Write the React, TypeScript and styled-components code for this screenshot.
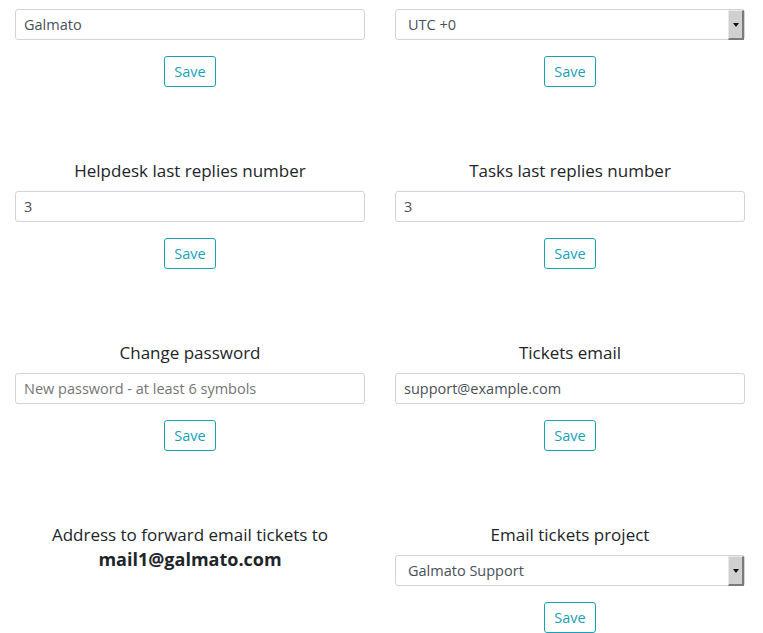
import styled, { createGlobalStyle } from 'styled-components';

const GlobalStyle = createGlobalStyle`
	body {
		margin: 0;
		background: #ffffff;
		font-family: 'Open Sans', 'Liberation Sans', sans-serif;
		color: #212529;
	}
`;

type Field =
	| { kind: 'input'; label?: string; value?: string; placeholder?: string }
	| { kind: 'select'; label?: string; value: string }
	| { kind: 'info'; label: string; value: string };

const fields: Field[] = [
	{ kind: 'input', value: 'Galmato' },
	{ kind: 'select', value: 'UTC +0' },
	{ kind: 'input', label: 'Helpdesk last replies number', value: '3' },
	{ kind: 'input', label: 'Tasks last replies number', value: '3' },
	{
		kind: 'input',
		label: 'Change password',
		placeholder: 'New password - at least 6 symbols',
	},
	{ kind: 'input', label: 'Tickets email', value: 'support@example.com' },
	{
		kind: 'info',
		label: 'Address to forward email tickets to',
		value: 'mail1@galmato.com',
	},
	{ kind: 'select', label: 'Email tickets project', value: 'Galmato Support' },
];

export default function App() {
	return (
		<>
			<GlobalStyle />
			<Grid>
				{fields.map((field, i) => (
					<Cell key={i} $first={i < 2}>
						{field.label && (
							<Label $tight={field.kind === 'info'}>{field.label}</Label>
						)}
						{field.kind === 'info' ? (
							<Address>{field.value}</Address>
						) : (
							<>
								{field.kind === 'input' ? (
									<Input
										type={field.placeholder ? 'password' : 'text'}
										defaultValue={field.value}
										placeholder={field.placeholder}
									/>
								) : (
									<SelectWrap>
										<Select defaultValue={field.value}>
											<option>{field.value}</option>
										</Select>
										<ArrowBox>
											<Triangle />
										</ArrowBox>
									</SelectWrap>
								)}
								<SaveBtn>Save</SaveBtn>
							</>
						)}
					</Cell>
				))}
			</Grid>
		</>
	);
}

const Grid = styled.div`
	display: grid;
	grid-template-columns: 350px 350px;
	column-gap: 30px;
	padding: 0 15px;
	align-items: start;
`;

const Cell = styled.div<{ $first: boolean }>`
	display: flex;
	flex-direction: column;
	align-items: center;
	padding-top: ${({ $first }) => ($first ? '9px' : '0')};
	padding-bottom: 72px;
`;

const Label = styled.div<{ $tight: boolean }>`
	font-size: 17px;
	line-height: 24px;
	margin-bottom: ${({ $tight }) => ($tight ? '0' : '8px')};
	color: #212529;
	text-align: center;
`;

const Address = styled.div`
	font-size: 18px;
	line-height: 24px;
	font-weight: 700;
	color: #212529;
`;

const Input = styled.input`
	box-sizing: border-box;
	width: 100%;
	height: 31px;
	padding: 0 8px;
	border: 1px solid #ced4da;
	border-radius: 3px;
	font-family: inherit;
	font-size: 14.5px;
	color: #495057;
	background: #fff;
	outline: none;
	::placeholder {
		color: #7b8288;
	}
`;

const SelectWrap = styled.div`
	position: relative;
	width: 100%;
`;

const Select = styled.select`
	box-sizing: border-box;
	width: 100%;
	height: 31px;
	padding: 0 12px;
	border: 1px solid #ced4da;
	border-radius: 3px;
	font-family: inherit;
	font-size: 14.5px;
	color: #495057;
	background: #fff;
	appearance: none;
	outline: none;
`;

const ArrowBox = styled.span`
	position: absolute;
	top: 1px;
	right: 1px;
	bottom: 0;
	width: 13px;
	display: flex;
	align-items: center;
	justify-content: center;
	background: #d0d0d0;
	border-top: 1px solid #e8e8e8;
	border-left: 1px solid #e8e8e8;
	border-right: 2px solid #7a7a7a;
	border-bottom: 2px solid #7a7a7a;
	pointer-events: none;
`;

const Triangle = styled.span`
	width: 0;
	height: 0;
	border-left: 3px solid transparent;
	border-right: 3px solid transparent;
	border-top: 4px solid #111;
`;

const SaveBtn = styled.button`
	margin-top: 16px;
	height: 31px;
	padding: 0 9px;
	border: 1px solid #17a2b8;
	border-radius: 3px;
	background: #fff;
	color: #17a2b8;
	font-family: inherit;
	font-size: 14.5px;
	cursor: pointer;
`;
